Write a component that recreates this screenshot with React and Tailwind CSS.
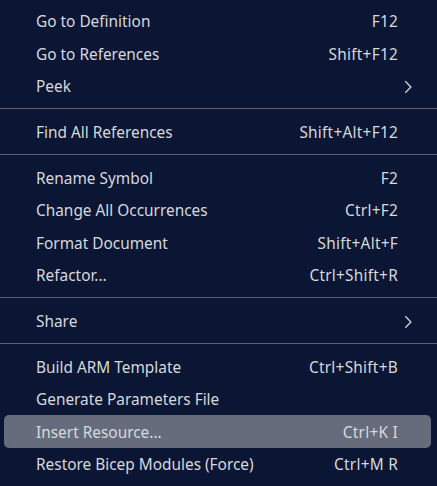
import React from 'react';

const items = [
  { label: 'Go to Definition', key: 'F12' },
  { label: 'Go to References', key: 'Shift+F12' },
  { label: 'Peek', sub: true },
  'sep',
  { label: 'Find All References', key: 'Shift+Alt+F12' },
  'sep',
  { label: 'Rename Symbol', key: 'F2' },
  { label: 'Change All Occurrences', key: 'Ctrl+F2' },
  { label: 'Format Document', key: 'Shift+Alt+F' },
  { label: 'Refactor...', key: 'Ctrl+Shift+R' },
  'sep',
  { label: 'Share', sub: true },
  'sep',
  { label: 'Build ARM Template', key: 'Ctrl+Shift+B' },
  { label: 'Generate Parameters File' },
  { label: 'Insert Resource...', key: 'Ctrl+K I', active: true },
  { label: 'Restore Bicep Modules (Force)', key: 'Ctrl+M R' },
];

function Chevron() {
  return (
    <svg width="8" height="14" viewBox="0 0 8 14" fill="none" className="text-[#d2d5db]">
      <path d="M1.3 1.2 L6.9 7 L1.3 12.8" stroke="currentColor" strokeWidth="1.3" />
    </svg>
  );
}

export default function App() {
  return (
    <div
      className="w-[437px] h-[486px] bg-[#0a1633] overflow-hidden pt-[4.8px] text-[15.4px] text-[#d6d9de]"
      style={{ fontFamily: '"Noto Sans", "Open Sans", sans-serif' }}
    >
      {items.map((item, i) =>
        item === 'sep' ? (
          <div key={i} className="h-[13.6px] flex items-center">
            <div className="w-full h-px bg-[#5c606b]" />
          </div>
        ) : (
          <div key={i} className="pl-1 pr-[6px]">
            <div
              className={`h-[32.4px] flex items-center justify-between rounded-[5px] pt-[1.5px] pl-8 ${
                item.sub ? 'pr-[19px]' : 'pr-[33px]'
              } ${item.active ? 'bg-[#666c7b]' : ''}`}
            >
              <span>{item.label}</span>
              {item.sub ? <Chevron /> : <span className="tracking-[0.25px]">{item.key}</span>}
            </div>
          </div>
        )
      )}
    </div>
  );
}
